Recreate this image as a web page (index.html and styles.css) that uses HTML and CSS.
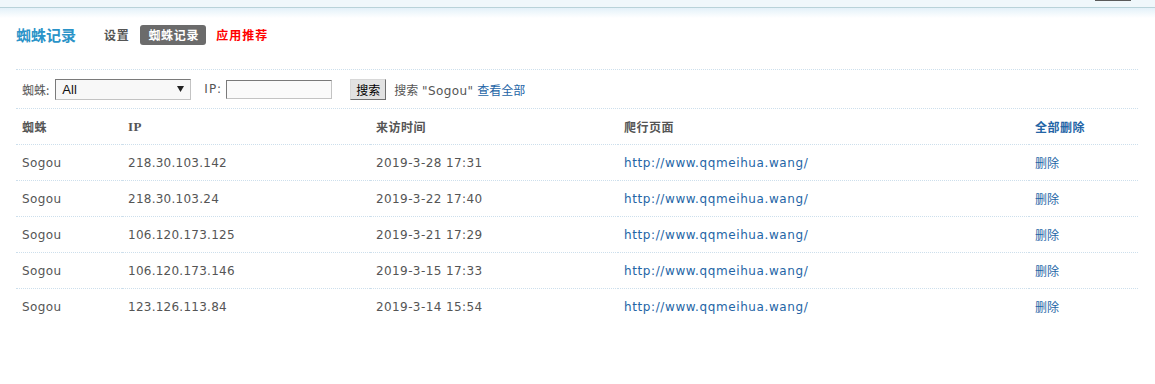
FILE: index.html
```html
<!DOCTYPE html>
<html lang="zh-CN">
<head>
<meta charset="utf-8">
<title>蜘蛛记录</title>
<link rel="stylesheet" href="styles.css">
</head>
<body>
<div class="topbar"><span class="topbar-btn"></span></div>
<div class="page">
  <div class="header">
    <h1 class="title">蜘蛛记录</h1>
    <nav class="tabs">
      <a class="tab">设置</a>
      <a class="tab tab-current">蜘蛛记录</a>
      <a class="tab tab-red">应用推荐</a>
    </nav>
  </div>
  <form class="filter">
    <label class="lbl">蜘蛛:</label>
    <div class="select"><span>All</span><svg class="arrow" width="7" height="6" viewBox="0 0 7 6"><path d="M0 0H7L3.5 6Z" fill="#222"/></svg></div>
    <label class="lbl lbl-ip">IP:</label>
    <div class="input"></div>
    <button type="button" class="btn">搜索</button>
    <span class="result">搜索 <span class="q">"Sogou"</span> <a class="link">查看全部</a></span>
  </form>
  <table class="log">
    <colgroup>
      <col class="c1"><col class="c2"><col class="c3"><col class="c4"><col>
    </colgroup>
    <thead>
      <tr><th>蜘蛛</th><th>IP</th><th>来访时间</th><th>爬行页面</th><th><a class="link">全部删除</a></th></tr>
    </thead>
    <tbody>
      <tr><td>Sogou</td><td class="ip">218.30.103.142</td><td>2019-3-28 17:31</td><td><a class="link">http://www.qqmeihua.wang/</a></td><td><a class="link">删除</a></td></tr>
      <tr><td>Sogou</td><td class="ip">218.30.103.24</td><td>2019-3-22 17:40</td><td><a class="link">http://www.qqmeihua.wang/</a></td><td><a class="link">删除</a></td></tr>
      <tr><td>Sogou</td><td class="ip">106.120.173.125</td><td>2019-3-21 17:29</td><td><a class="link">http://www.qqmeihua.wang/</a></td><td><a class="link">删除</a></td></tr>
      <tr><td>Sogou</td><td class="ip">106.120.173.146</td><td>2019-3-15 17:33</td><td><a class="link">http://www.qqmeihua.wang/</a></td><td><a class="link">删除</a></td></tr>
      <tr><td>Sogou</td><td class="ip">123.126.113.84</td><td>2019-3-14 15:54</td><td><a class="link">http://www.qqmeihua.wang/</a></td><td><a class="link">删除</a></td></tr>
    </tbody>
  </table>
</div>
</body>
</html>
```
FILE: styles.css
```css
html, body {
  margin: 0;
  background: #fff;
}
body {
  font-family: "DejaVu Sans", "Noto Sans CJK SC", sans-serif;
  font-size: 12px;
  color: #555;
}
.topbar {
  height: 7px;
  background: #eff7fb;
  border-bottom: 1px solid #b8d2d9;
  display: flex;
  justify-content: flex-end;
  padding-right: 24px;
}
.topbar-btn {
  width: 36px;
  height: 1px;
  background: #5a5a5a;
}
.page {
  padding: 0 17px 0 16px;
  background: linear-gradient(#e3f1f9, #fff 10px) no-repeat;
  background-size: 100% 12px;
}
.header {
  display: flex;
  align-items: center;
  padding-top: 17px;
  padding-bottom: 24px;
  border-bottom: 1px dotted #cddfec;
}
.title {
  margin: 0;
  font-family: "Noto Sans CJK SC", sans-serif;
  font-size: 15px;
  line-height: 20px;
  font-weight: bold;
  color: #2a93c8;
}
.tabs {
  display: flex;
  align-items: center;
  margin-left: 28px;
  gap: 10px;
}
.tab {
  font-family: "Noto Sans CJK SC", sans-serif;
  font-size: 12px;
  font-weight: bold;
  line-height: 20px;
  letter-spacing: 0.7px;
  color: #555;
}
.tab-current {
  margin-left: 1px;
  background: #6b6b6b;
  color: #fff;
  border-radius: 3px;
  padding: 0 7px 0 8px;
}
.tab-red {
  color: #f00;
  letter-spacing: 1px;
}
.filter {
  display: flex;
  align-items: center;
  margin: 0;
  padding: 8px 0 8px 6px;
  height: 22px;
  border-bottom: 1px dotted #cddfec;
}
.lbl {
  font-family: "Noto Sans CJK SC", sans-serif;
  color: #555;
}
.lbl-ip {
  margin-left: 13px;
  font-family: "DejaVu Sans", sans-serif;
  letter-spacing: 1px;
}
.select {
  margin-left: 6px;
  width: 134px;
  height: 19px;
  box-sizing: content-box;
  border: 1px solid;
  border-color: #7a7a7a #c3c3c3 #c3c3c3 #7a7a7a;
  background: #f8f8f8;
  display: flex;
  align-items: center;
  justify-content: space-between;
  padding: 0;
  color: #111;
  font-family: "Liberation Sans", Arial, sans-serif;
  font-size: 13px;
}
.select span {
  margin-left: 6px;
}
.arrow {
  margin-right: 6px;
}
.input {
  margin-left: 4px;
  width: 104px;
  height: 17px;
  border: 1px solid;
  border-color: #7a7a7a #c3c3c3 #c3c3c3 #7a7a7a;
  background: #fafafa;
}
.btn {
  margin-left: 18px;
  width: 36px;
  height: 21px;
  padding: 0;
  border: 1px solid;
  border-color: #d8d8d8 #707070 #707070 #d8d8d8;
  background: #e2e2e2;
  font-family: "Noto Sans CJK SC", sans-serif;
  font-size: 12px;
  color: #000;
}
.result {
  margin-left: 8px;
  color: #555;
  font-family: "DejaVu Sans", "Noto Sans CJK SC", sans-serif;
}
.q {
  letter-spacing: 0.4px;
}
.link {
  color: #2465a6;
  text-decoration: none;
}
.log {
  width: 100%;
  border-collapse: collapse;
  table-layout: fixed;
}
.c1 { width: 106px; }
.c2 { width: 248px; }
.c3 { width: 248px; }
.c4 { width: 411px; }
.log th, .log td {
  height: 35px;
  padding: 0 0 0 6px;
  text-align: left;
  vertical-align: middle;
  border-bottom: 1px dotted #cddfec;
}
.log th {
  font-family: "Noto Sans CJK SC", "DejaVu Sans", sans-serif;
  font-weight: bold;
  letter-spacing: 0.5px;
  color: #555;
}
.log th .link {
  color: #2465a6;
}
.log th:nth-child(2) {
  font-family: "Liberation Serif", serif;
  font-size: 13px;
}
.log tbody tr:last-child td {
  border-bottom: none;
}
.log td {
  color: #555;
  letter-spacing: 0.4px;
}
.log td.ip {
  letter-spacing: 0.25px;
}
.log td:nth-child(4) {
  letter-spacing: 0.6px;
}
.log td:nth-child(5) {
  letter-spacing: 0;
}
```
